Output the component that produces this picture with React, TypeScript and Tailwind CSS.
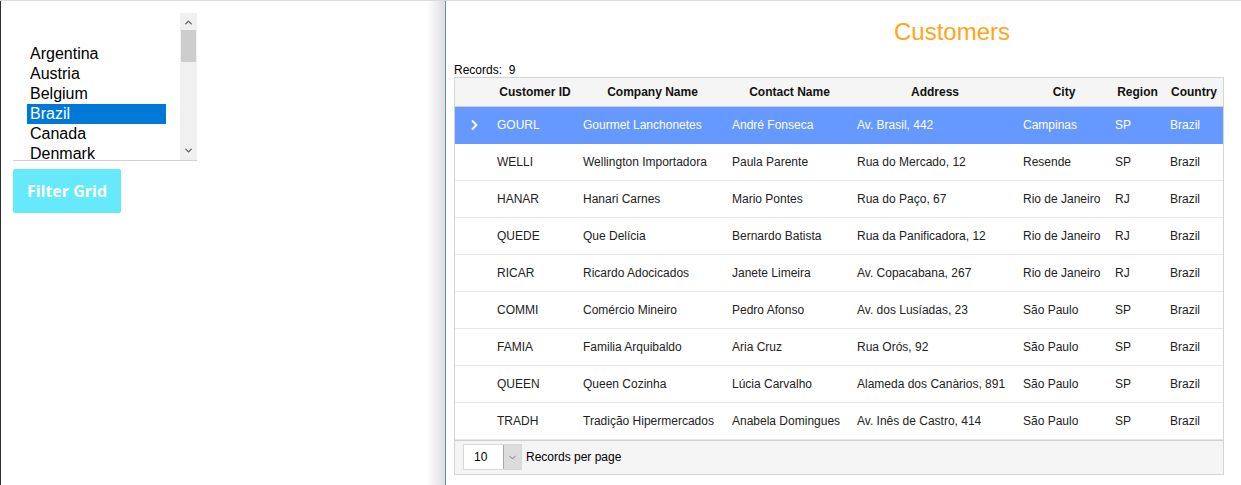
import { ChevronDown, ChevronUp } from 'lucide-react'

const countries = ['Argentina', 'Austria', 'Belgium', 'Brazil', 'Canada', 'Denmark']

const customers = [
  ['GOURL', 'Gourmet Lanchonetes', 'André Fonseca', 'Av. Brasil, 442', 'Campinas', 'SP', 'Brazil'],
  ['WELLI', 'Wellington Importadora', 'Paula Parente', 'Rua do Mercado, 12', 'Resende', 'SP', 'Brazil'],
  ['HANAR', 'Hanari Carnes', 'Mario Pontes', 'Rua do Paço, 67', 'Rio de Janeiro', 'RJ', 'Brazil'],
  ['QUEDE', 'Que Delícia', 'Bernardo Batista', 'Rua da Panificadora, 12', 'Rio de Janeiro', 'RJ', 'Brazil'],
  ['RICAR', 'Ricardo Adocicados', 'Janete Limeira', 'Av. Copacabana, 267', 'Rio de Janeiro', 'RJ', 'Brazil'],
  ['COMMI', 'Comércio Mineiro', 'Pedro Afonso', 'Av. dos Lusíadas, 23', 'São Paulo', 'SP', 'Brazil'],
  ['FAMIA', 'Familia Arquibaldo', 'Aria Cruz', 'Rua Orós, 92', 'São Paulo', 'SP', 'Brazil'],
  ['QUEEN', 'Queen Cozinha', 'Lúcia Carvalho', 'Alameda dos Canàrios, 891', 'São Paulo', 'SP', 'Brazil'],
  ['TRADH', 'Tradição Hipermercados', 'Anabela Domingues', 'Av. Inês de Castro, 414', 'São Paulo', 'SP', 'Brazil'],
]

const headers = ['Customer ID', 'Company Name', 'Contact Name', 'Address', 'City', 'Region', 'Country']

const App = () => {
  return (
    <div className="flex h-[485px] w-[1241px] overflow-hidden border-t border-[#dcdcdc] bg-white font-['Liberation_Sans',Arial,sans-serif]">
      {/* left panel */}
      <div className="flex w-[446px] shrink-0 border-l border-r border-l-[#2e2e2e] border-r-[#5e8fd0]">
        <div className="flex-1 pl-3 pt-3">
          <div className="flex h-[148px] w-[184px] border-b border-[#d0d0d0]">
            <div className="flex-1 overflow-hidden pl-[14px] pr-[14px] pt-[31px] text-[16px] leading-[20px] text-black">
              {countries.map((c) => (
                <div
                  key={c}
                  className={c === 'Brazil' ? 'bg-[#0078d7] pl-[3px] text-white' : 'pl-[3px]'}
                >
                  {c}
                </div>
              ))}
            </div>
            <div className="flex w-[17px] flex-col items-center bg-[#f0f0f0]">
              <ChevronUp size={11} strokeWidth={3} className="mt-[4px] text-[#606060]" />
              <div className="mt-[2px] h-[32px] w-[15px] bg-[#cdcdcd]" />
              <div className="flex-1" />
              <ChevronDown size={11} strokeWidth={3} className="mb-[4px] text-[#606060]" />
            </div>
          </div>
          <button className="mt-2 h-[44px] w-[108px] rounded-[2px] bg-[#66e9fb] font-['Open_Sans',sans-serif] text-[16px] font-bold text-white">
            Filter Grid
          </button>
        </div>
        <div className="w-[18px] bg-gradient-to-r from-white to-[#dedede]" />
      </div>

      {/* right panel */}
      <div className="flex-1 pl-2">
        <div className="h-[62px] pl-[440px] pt-[17px] text-[24px] leading-[28px] text-[#ffa519]">Customers</div>
        <div className="h-[14px] text-[12px] leading-[14px] text-black whitespace-pre">Records:  9</div>
        <div className="w-[770px] border border-[#d4d4d4] text-[12px] text-[#222]">
          <table className="w-full table-fixed border-collapse">
            <colgroup>
              <col className="w-[37px]" />
              <col className="w-[86px]" />
              <col className="w-[149px]" />
              <col className="w-[125px]" />
              <col className="w-[166px]" />
              <col className="w-[92px]" />
              <col className="w-[55px]" />
              <col className="w-[58px]" />
            </colgroup>
            <thead>
              <tr className="h-[28px] border-b border-[#d0d0d0] bg-[#f5f5f5]">
                <th />
                {headers.map((h) => (
                  <th key={h} className="whitespace-nowrap text-center font-bold text-[#111]">
                    {h}
                  </th>
                ))}
              </tr>
            </thead>
            <tbody>
              {customers.map((row, i) => (
                <tr
                  key={row[0]}
                  className={
                    i === 0
                      ? 'h-[37px] border-b border-[#6699ff] bg-[#6699ff] text-white'
                      : 'h-[37px] border-b border-[#e6e6e6]'
                  }
                >
                  <td className="text-center">
                    {i === 0 && (
                      <svg width="8" height="12" viewBox="0 0 8 12" className="inline-block">
                        <path d="M2 1.5 L6.5 6 L2 10.5" fill="none" stroke="white" strokeWidth="1.8" />
                      </svg>
                    )}
                  </td>
                  {row.map((cell, j) => (
                    <td key={j} className="whitespace-nowrap pl-[5px]">
                      {cell}
                    </td>
                  ))}
                </tr>
              ))}
            </tbody>
          </table>
          <div className="flex h-[34px] items-center border-t border-[#d0d0d0] bg-[#f5f5f5] pl-2">
            <div className="flex h-[26px] items-stretch border border-[#d8d8d8] bg-white">
              <div className="flex w-[39px] items-center pl-[10px] text-[12px] text-black">10</div>
              <div className="flex w-[18px] items-center justify-center border-l border-[#aaa] bg-[#dcdcdc]">
                <ChevronDown size={11} strokeWidth={1.5} className="text-[#555]" />
              </div>
            </div>
            <span className="ml-[4px] text-[12px] text-black">Records per page</span>
          </div>
        </div>
      </div>
    </div>
  )
}

export default App
